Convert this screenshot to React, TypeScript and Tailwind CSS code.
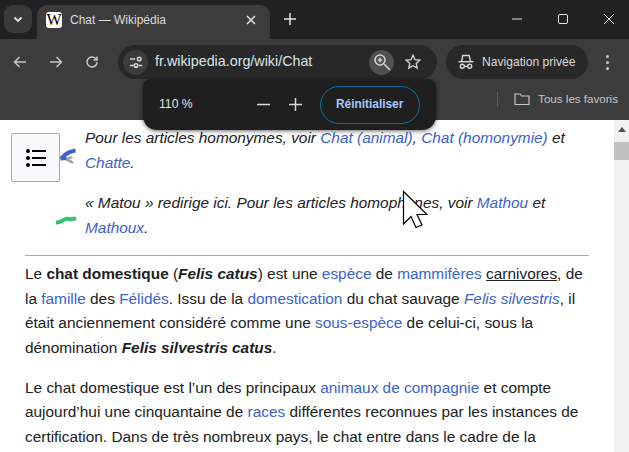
import React from "react";

const A = ({ children }: { children: React.ReactNode }) => <span className="text-[#3b63c9]">{children}</span>;

const Stroke = ({ className, children, vb = "0 0 16 16" }: { className: string; children: React.ReactNode; vb?: string }) => (
  <svg viewBox={vb} fill="none" stroke="currentColor" strokeWidth="1.5" className={className}>{children}</svg>
);

export default function App() {
  return (
    <div className="relative flex h-[452px] w-[629px] flex-col overflow-hidden bg-white font-['Liberation_Sans',Arial,sans-serif]">
      {/* Tab strip */}
      <div className="flex h-[39px] shrink-0 items-end bg-[#202222] pl-1 text-[#e3e3e3]">
        <div className="mb-[6px] flex h-[28px] w-[28px] items-center justify-center rounded-[9px] bg-[#3a3a3a]">
          <Stroke className="h-[10px] w-[10px]" vb="0 0 10 10"><path d="M1.5 3.5 5 7l3.5-3.5" strokeWidth="1.8" /></Stroke>
        </div>
        <div className="ml-[5px] flex h-[34px] w-[233px] items-center rounded-t-[10px] bg-[#3c3c3c] pb-[5px] pl-[9px]">
          <div className="flex h-[16px] w-[16px] items-center justify-center rounded-[3px] bg-white font-['Liberation_Serif',serif] text-[16px] leading-none text-black">W</div>
          <span className="ml-[8px] text-[12px] text-[#dcdcdc]">Chat — Wikipédia</span>
          <Stroke className="ml-auto mr-[14px] h-[10px] w-[10px]" vb="0 0 10 10"><path d="m1 1 8 8M9 1 1 9" /></Stroke>
        </div>
        <Stroke className="mb-[14px] ml-[14px] h-[12px] w-[12px]" vb="0 0 12 12"><path d="M6 0v12M0 6h12" /></Stroke>
        <div className="mb-[14px] ml-auto flex items-center">
          <Stroke className="h-[12px] w-[12px]" vb="0 0 12 12"><path d="M1 6h10" strokeWidth="1" /></Stroke>
          <Stroke className="ml-[34px] h-[12px] w-[12px]" vb="0 0 12 12"><rect x="1.500" y="1.500" width="9" height="9" rx="1.500" strokeWidth="1" /></Stroke>
          <Stroke className="ml-[34px] mr-[14px] h-[12px] w-[12px]" vb="0 0 12 12"><path d="m1 1 10 10M11 1 1 11" strokeWidth="1" /></Stroke>
        </div>
      </div>

      {/* Toolbar */}
      <div className="flex h-[46px] shrink-0 items-center bg-[#3c3c3c] pl-[13px] text-[#c7c7c7]">
        <Stroke className="h-[14px] w-[14px]" vb="0 0 14 14"><path d="M13 7H1.500M6.500 2l-5 5 5 5" /></Stroke>
        <Stroke className="ml-[22px] h-[14px] w-[14px]" vb="0 0 14 14"><path d="M1 7h11.500M7.500 2l5 5-5 5" /></Stroke>
        <Stroke className="ml-[22px] h-[14px] w-[14px]" vb="0 0 14 14"><path d="M12 7a5 5 0 1 1-1.600-3.700L12 5M12 1.500V5H8.500" /></Stroke>
        <div className="ml-[19px] flex h-[34px] w-[319px] items-center rounded-full bg-[#282828] pl-[5px]">
          <div className="flex h-[25px] w-[25px] items-center justify-center rounded-full bg-[#3c3c3c]">
            <Stroke className="h-[14px] w-[14px] text-[#d8d8d8]" vb="0 0 14 14">
              <path d="M1 4h5M1 10.500h3.500M10 10.500h3" /><circle cx="10.200" cy="4" r="1.800" /><circle cx="7" cy="10.500" r="1.800" />
            </Stroke>
          </div>
          <span className="ml-[7px] text-[14.3px] text-[#d9e4ea]">fr.wikipedia.org/wiki/Chat</span>
          <div className="ml-auto flex h-[25px] w-[25px] items-center justify-center rounded-full bg-[#505050]">
            <svg viewBox="0 0 18 18" fill="none" stroke="#d0d0d0" strokeWidth="1.600" className="h-[18px] w-[18px]">
              <circle cx="7" cy="7" r="5" /><path d="m11 11 6 6M4.800 7h4.400M7 4.800v4.400" />
            </svg>
          </div>
          <svg viewBox="0 0 16 16" fill="none" stroke="#d0d0d0" strokeWidth="1.400" className="ml-[11px] mr-[16px] h-[16px] w-[16px]">
            <path d="m8 1.300 2 4.400 4.800.5-3.600 3.200 1 4.700L8 11.700l-4.200 2.400 1-4.700L1.200 6.200 6 5.700Z" />
          </svg>
        </div>
        <div className="ml-[9px] flex h-[34px] w-[142px] items-center rounded-full bg-[#282828] pl-[12px] text-[#d8d8d8]">
          <svg viewBox="0 0 16 16" fill="none" stroke="currentColor" strokeWidth="1.400" className="h-[16px] w-[16px]">
            <path d="M0.500 7.700h15" /><path d="M3.500 7.500 4.800 1.500h6.400l1.300 6" /><circle cx="4.300" cy="12.300" r="2" /><circle cx="11.700" cy="12.300" r="2" /><path d="M6.300 12.300h3.400" />
          </svg>
          <span className="ml-[8px] text-[12.1px]">Navigation privée</span>
        </div>
        <div className="ml-[18px] flex flex-col gap-[3px]">
          <div className="h-[3px] w-[3px] rounded-full bg-[#c7c7c7]" />
          <div className="h-[3px] w-[3px] rounded-full bg-[#c7c7c7]" />
          <div className="h-[3px] w-[3px] rounded-full bg-[#c7c7c7]" />
        </div>
      </div>

      {/* Bookmarks bar */}
      <div className="flex h-[35px] shrink-0 items-center justify-end bg-[#3c3c3c] pb-[7px] pr-[11px] text-[#c7c7c7]">
        <div className="mr-[16px] h-[15px] w-px bg-[#5c5c5c]" />
        <svg viewBox="0 0 16 16" fill="none" stroke="currentColor" strokeWidth="1.200" className="h-[16px] w-[16px]">
          <path d="M1 13.500v-10.500h5l1.500 2H15v8.500Z" />
        </svg>
        <span className="ml-[8px] text-[11.6px]">Tous les favoris</span>
      </div>

      {/* Page */}
      <div className="flex min-h-0 flex-1">
        <div className="min-w-0 flex-1 pl-[25px] text-[15.4px] leading-[24.64px] text-[#202122] whitespace-nowrap">
          <div className="pl-[60px] pt-[6px] italic">
            <p>Pour les articles homonymes, voir <A>Chat (animal)</A>, <A>Chat (homonymie)</A> et<br /><A>Chatte</A>.</p>
            <p className="mt-[16px]">« Matou » redirige ici. Pour les articles homophones, voir <A>Mathou</A> et<br /><A>Mathoux</A>.</p>
          </div>
          <div className="mt-[14px] h-px w-[564px] bg-[#a2a9b1]" />
          <p className="mt-[6.500px]">
            Le <b>chat domestique</b> (<b><i>Felis catus</i></b>) est une <A>espèce</A> de <A>mammifères</A> <span className="underline">carnivores</span>, de<br />
            la <A>famille</A> des <A>Félidés</A>. Issu de la <A>domestication</A> du chat sauvage <A><i>Felis silvestris</i></A>, il<br />
            était anciennement considéré comme une <A>sous-espèce</A> de celui-ci, sous la<br />
            dénomination <b><i>Felis silvestris catus</i></b>.
          </p>
          <p className="mt-[15px]">
            Le chat domestique est l’un des principaux <A>animaux de compagnie</A> et compte<br />
            aujourd’hui une cinquantaine de <A>races</A> différentes reconnues par les instances de<br />
            certification. Dans de très nombreux pays, le chat entre dans le cadre de la
          </p>
        </div>
        <div className="flex w-[15px] shrink-0 flex-col items-center bg-[#f1f1f1]">
          <div className="mt-[7px] h-0 w-0 border-x-[4px] border-b-[5px] border-x-transparent border-b-[#505050]" />
          <div className="mt-[10px] h-[18px] w-full bg-[#c1c1c1]" />
        </div>
      </div>

      {/* Zoom bubble */}
      <div className="absolute left-[143px] top-[79px] flex h-[51px] w-[293px] items-center rounded-b-[14px] rounded-t-[8px] bg-[#1f1f1f] pl-[16px] shadow-[0_1px_4px_rgba(0,0,0,0.6)]">
        <span className="text-[12.2px] text-[#e3e3e3]">110 %</span>
        <Stroke className="ml-[64px] h-[13px] w-[13px] text-[#d8d8d8]" vb="0 0 13 13"><path d="M0 6.500h13" /></Stroke>
        <Stroke className="ml-[19px] h-[13px] w-[13px] text-[#d8d8d8]" vb="0 0 13 13"><path d="M0 6.500h13M6.500 0v13" /></Stroke>
        <div className="ml-[18px] flex h-[38px] w-[100px] items-center justify-center rounded-full border border-[#0f6f9f] text-[11.9px] font-bold text-[#a8c7fa]">Réinitialiser</div>
      </div>

      {/* Sommaire button */}
      <div className="absolute left-[11px] top-[133px] flex h-[49px] w-[49px] items-center justify-center rounded-[2px] border border-[#a2a9b1] bg-[#f8f9fa]">
        <svg viewBox="0 0 20 20" className="h-[20px] w-[20px]" fill="#000">
          <circle cx="2" cy="3" r="2" /><circle cx="2" cy="10" r="2" /><circle cx="2" cy="17" r="2" />
          <rect x="6" y="2" width="14" height="2" /><rect x="6" y="9" width="14" height="2" /><rect x="6" y="16" width="14" height="2" />
        </svg>
      </div>

      {/* Hatnote icons */}
      <svg viewBox="0 0 20 18" className="absolute left-[59px] top-[148px] h-[18px] w-[20px]" fill="none">
        <path d="M7 11 C10 10 11 9.500 13.500 9.500" stroke="#a5a5a5" strokeWidth="2.400" />
        <path d="M7 11.500 C10 12 12 13.500 14 15" stroke="#a5a5a5" strokeWidth="2.800" />
        <path d="M2 10.500 C5 8 7 4 16.500 2.500" stroke="#3b63c9" strokeWidth="3.800" />
        <path d="M1.500 11 C3.500 10.500 5 10.500 7.500 10.500" stroke="#3b63c9" strokeWidth="3" />
      </svg>
      <svg viewBox="0 0 22 10" className="absolute left-[55px] top-[215px] h-[10px] w-[22px]" fill="none">
        <path d="M1 7.500 C4 7.500 6 7 8.500 5 C11 3 13 3.500 15 4 C17 4.500 19 4 21 3" stroke="#36c172" strokeWidth="4" />
      </svg>

      {/* Cursor */}
      <svg viewBox="0 0 26 40" className="absolute left-[402px] top-[190px] h-[40px] w-[26px]">
        <path d="M1.500 1.500V34L9 26.500l5 11 6-2.500-5-10.500h10Z" fill="#fff" stroke="#000" strokeWidth="1.200" />
      </svg>
    </div>
  );
}
